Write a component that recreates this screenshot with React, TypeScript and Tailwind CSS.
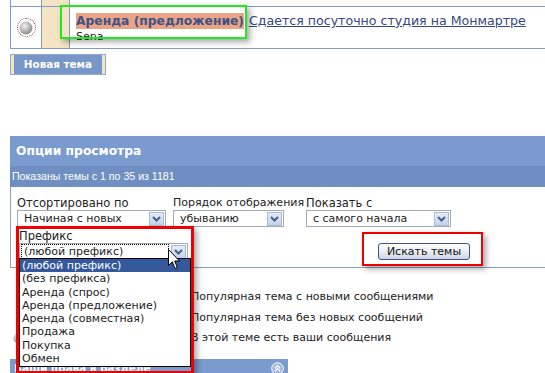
import React from "react";

const verdana = "font-['DejaVu_Sans',Verdana,sans-serif]";
const tahoma = "font-['Liberation_Sans',Tahoma,sans-serif]";

function Chevron() {
  return (
    <div className="mr-[1px] flex h-[14px] w-[15px] items-center justify-center border border-[#a7bcdb] bg-[linear-gradient(#e3ecf8,#c2d3ec)]">
      <svg width="9" height="6" viewBox="0 0 9 6">
        <path d="M1 1 L4.5 4.5 L8 1" fill="none" stroke="#4b5d80" strokeWidth="2" />
      </svg>
    </div>
  );
}

function FakeSelect({ value, className, focus }: { value: string; className: string; focus?: boolean }) {
  return (
    <div className={`flex h-[17px] items-center border border-[#a5abb3] bg-white ${className}`}>
      <div className="flex-1 pl-[1px]">
        <div
          className={`text-[11px] leading-[13px] text-[#1c1c1c] ${
            focus ? "mr-[2px] border border-dotted border-black pl-[2px]" : "pl-[5px]"
          }`}
        >
          {value}
        </div>
      </div>
      <Chevron />
    </div>
  );
}

function Ball({ size = 12 }: { size?: number }) {
  return (
    <svg width={size} height={size} viewBox="0 0 12 12">
      <defs>
        <radialGradient id="ballg" cx="40%" cy="35%" r="65%">
          <stop offset="0%" stopColor="#f4f4f4" />
          <stop offset="100%" stopColor="#8a8a8a" />
        </radialGradient>
      </defs>
      <circle cx="6" cy="6" r="5.5" fill="url(#ballg)" />
    </svg>
  );
}

const prefixes = [
  "(любой префикс)",
  "(без префикса)",
  "Аренда (спрос)",
  "Аренда (предложение)",
  "Аренда (совместная)",
  "Продажа",
  "Покупка",
  "Обмен",
];

const legend = [
  ["Новая тема с новыми сообщениями", "Популярная тема с новыми сообщениями"],
  ["Тема без новых сообщений", "Популярная тема без новых сообщений"],
  ["Закрытая тема", "В этой теме есть ваши сообщения"],
];

export default function App() {
  return (
    <div className={`relative h-[373px] w-[545px] overflow-hidden bg-white ${verdana}`}>
      {/* topic row */}
      <div className="ml-[10px] w-[600px]">
        <div className="flex h-[6px]">
          <div className="w-[32px] border-x border-[#7f9acb]" />
          <div className="w-[28px] border-r border-[#7f9acb] bg-[#f5e4c4]" />
          <div className="flex-1" />
        </div>
        <div className="flex h-[43px] border-y border-[#7f9acb]">
          <div className="flex w-[32px] items-center justify-center border-x border-[#7f9acb]">
            <div className="flex h-[19px] w-[19px] items-center justify-center rounded-full border border-dotted border-[#a33]">
              <Ball size={14} />
            </div>
          </div>
          <div className="w-[28px] border-r border-[#7f9acb] bg-[#f5e4c4]" />
          <div className="flex-1 pl-[6px] pt-[6px]">
            <div className="flex items-baseline gap-[5px] leading-[16px]">
              <span className="bg-[#e9a487] text-[12.3px] font-bold text-[#3f5285]">Аренда (предложение)</span>
              <span className="text-[12.6px] text-[#34487c] underline">Сдается посуточно студия на Монмартре</span>
            </div>
            <div className="mt-[1px] text-[11px] leading-[13px] text-[#222]">Sena</div>
          </div>
        </div>
      </div>

      {/* new topic button */}
      <div className="ml-[10px] mt-[5px] flex h-[21px] w-[96px] border border-[#93aad6] bg-[#7896c8]">
        <div className="w-[3px] bg-[#f3e3c5]" />
        <div className="flex flex-1 items-center justify-center text-[10.4px] font-bold text-white">Новая тема</div>
        <div className="w-[3px] bg-[#f3e3c5]" />
      </div>

      {/* view options panel */}
      <div className="ml-[10px] mt-[61px] w-[540px]">
        <div className="flex h-[30px] items-center bg-[#7b9bcf] pl-[6px] text-[12.3px] font-bold text-white">
          Опции просмотра
        </div>
        <div className={`flex h-[21px] items-center bg-[#6f8fc2] pl-[2px] text-[10.6px] text-white ${tahoma}`}>
          Показаны темы с 1 по 35 из 1181
        </div>
        <div className="h-[81px] border-b border-l border-[#8aa0cc] pt-[9px]">
          <div className="flex pl-[6px] text-[11.5px] leading-[14px] text-[#222]">
            <div className="w-[156px]">
              <div>Отсортировано по</div>
              <FakeSelect value="Начиная с новых" className="w-[149px]" />
            </div>
            <div className="w-[133px]">
              <div className="whitespace-nowrap text-[11px]">Порядок отображения</div>
              <FakeSelect value="убыванию" className="w-[111px]" />
            </div>
            <div>
              <div>Показать с</div>
              <FakeSelect value="с самого начала" className="w-[145px]" />
            </div>
          </div>
          <div className="mt-[2px] flex items-end pl-[8px] text-[11.5px] leading-[14px] text-[#222]">
            <div className="w-[169px]">
              <div>Префикс</div>
              <FakeSelect value="(любой префикс)" className="w-[169px]" focus />
            </div>
            <div className="ml-[190px] flex h-[17px] w-[92px] items-center justify-center rounded-[3px] border border-[#3d5686] bg-[linear-gradient(#ffffff,#e6e9f1_60%,#cdd3e2)] text-[11px] text-[#111]">
              Искать темы
            </div>
          </div>
        </div>

        {/* legend */}
        <div className="pt-[19px] text-[11px] leading-[20.5px] text-[#222]">
          {legend.map(([a, b]) => (
            <div key={b} className="flex items-center">
              <div className="flex w-[165px] items-center gap-[6px] overflow-hidden whitespace-nowrap pl-[3px]">
                <Ball size={11} />
                <span>{a}</span>
              </div>
              <div className="flex items-center gap-[5px] whitespace-nowrap">
                <Ball size={11} />
                <span>{b}</span>
              </div>
            </div>
          ))}
        </div>

        {/* permissions bar */}
        <div className="mt-[10px] flex h-[20px] w-[278px] items-center justify-between bg-[#7b9bcf] px-[4px] text-[10.4px] font-bold text-white">
          <span>Ваши права в разделе</span>
          <svg width="13" height="13" viewBox="0 0 13 13">
            <circle cx="6.5" cy="6.5" r="5.8" fill="#9fb6dc" stroke="#fff" strokeWidth="1" />
            <path d="M3.8 6.2 L6.5 3.6 L9.2 6.2 M3.8 9.2 L6.5 6.6 L9.2 9.2" fill="none" stroke="#fff" strokeWidth="1.3" />
          </svg>
        </div>
      </div>

      {/* annotation: green box */}
      <div className="absolute left-[60px] top-[5px] h-[34px] w-[187px] border-2 border-[#22e81f] shadow-[3px_3px_6px_rgba(0,0,0,0.35)]" />

      {/* annotation: red box with open dropdown */}
      <div className="absolute left-[16px] top-[226px] h-[148px] w-[178px] border-[3px] border-[#ee0000] shadow-[3px_3px_6px_rgba(0,0,0,0.35)]" />
      <div className="absolute left-[19px] top-[258px] h-[109px] w-[172px] border border-black bg-white text-[11px] leading-[13.25px] text-[#1c1c1c]">
        {prefixes.map((p, i) => (
          <div key={p} className={`pl-[2px] ${i === 0 ? "bg-[#34589c] text-white" : ""}`}>
            {p}
          </div>
        ))}
      </div>

      {/* cursor */}
      <svg className="absolute left-[168px] top-[249px]" width="13" height="21" viewBox="0 0 13 21">
        <path d="M0.5 0.5 L0.5 16.5 L4.3 12.8 L7 19.5 L9.3 18.5 L6.7 12 L11.5 12 Z" fill="#fff" stroke="#000" strokeWidth="1" />
      </svg>

      {/* annotation: red box around button */}
      <div className="absolute left-[362px] top-[232px] h-[34px] w-[121px] border-2 border-[#ee0000] shadow-[3px_3px_6px_rgba(0,0,0,0.35)]" />
    </div>
  );
}
